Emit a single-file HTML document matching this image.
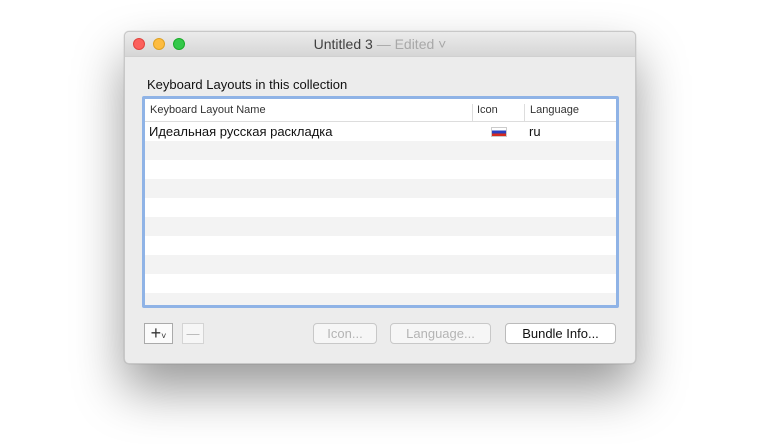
<!DOCTYPE html>
<html><head><meta charset="utf-8"><style>
*{box-sizing:border-box;margin:0;padding:0}
body{width:760px;height:444px;background:#fff;position:relative;overflow:hidden;font-family:"Liberation Sans",sans-serif}
.win{position:absolute;left:124px;top:31px;width:512px;height:333px;background:#ececec;border-radius:5px;border:1px solid #c8c8c8;box-shadow:0 26px 50px rgba(0,0,0,.4),0 0 1px rgba(0,0,0,.3)}
.tb{height:25px;border-bottom:1px solid #d0d0d0;background:linear-gradient(#ebebeb,#d6d6d6);border-radius:5px 5px 0 0;position:relative}
.dot{position:absolute;top:6px;width:12px;height:12px;border-radius:50%}
.title{position:absolute;left:0;right:0;top:4px;text-align:center;font-size:14px;color:#404040}
.title span{color:#a8a8a8}
.lbl{position:absolute;left:22px;top:45px;font-size:13px;color:#111}
.tbl{position:absolute;left:17px;top:64px;width:477px;height:212px;border:3px solid #8fb3e6;border-radius:2px;background:#fff;overflow:hidden}
.hd{height:23px;border-bottom:1px solid #ddd;font-size:11px;color:#333;position:relative}
.hd div{position:absolute;top:5px}
.sep{position:absolute;top:2px;width:1px;height:18px;background:#ddd}
.row{height:19px;position:relative;font-size:13px;color:#111}
.g{background:#f3f3f3}
.btn{position:absolute;top:291px;height:21px;border:1px solid #c8c8c8;border-radius:4px;background:#f6f6f6;font-size:13px;text-align:center;line-height:19px;color:#b4b4b4}
</style></head><body>
<div class="win">
<div class="tb">
<div class="dot" style="left:8px;background:#fc605c;border:1px solid #e0443e"></div>
<div class="dot" style="left:28px;background:#fdbc40;border:1px solid #dea123"></div>
<div class="dot" style="left:48px;background:#34c84a;border:1px solid #1aab29"></div>
<div class="title">Untitled 3 <span>— Edited ˅</span></div>
</div>
<div class="lbl">Keyboard Layouts in this collection</div>
<div class="tbl">
<div class="hd"><div style="left:5px">Keyboard Layout Name</div><div class="sep" style="left:327px"></div><div style="left:332px">Icon</div><div class="sep" style="left:379px"></div><div style="left:385px">Language</div></div>
<div class="row"><span style="position:absolute;left:4px;top:2px">Идеальная русская раскладка</span>
<div style="position:absolute;left:346px;top:5px;width:16px;height:10px;background:linear-gradient(#fff 0 33%,#2a3fbf 33% 66%,#d52b1e 66%);border:1px solid #ccc"></div>
<span style="position:absolute;left:384px;top:2px">ru</span></div>
<div class="row g"></div><div class="row"></div><div class="row g"></div><div class="row"></div><div class="row g"></div><div class="row"></div><div class="row g"></div><div class="row"></div><div class="row g"></div>
</div>
<div class="btn" style="left:19px;width:29px;border-radius:0;background:#fbfbfb;color:#333;font-size:18px;line-height:18px;border-color:#aaa">+<span style="font-size:9px">˅</span></div>
<div class="btn" style="left:57px;width:22px;border-radius:0;border-color:#d4d4d4">—</div>
<div class="btn" style="left:188px;width:64px">Icon...</div>
<div class="btn" style="left:265px;width:101px">Language...</div>
<div class="btn" style="left:380px;width:111px;background:#fff;color:#111;border-color:#bbb">Bundle Info...</div>
</div>
</body></html>
